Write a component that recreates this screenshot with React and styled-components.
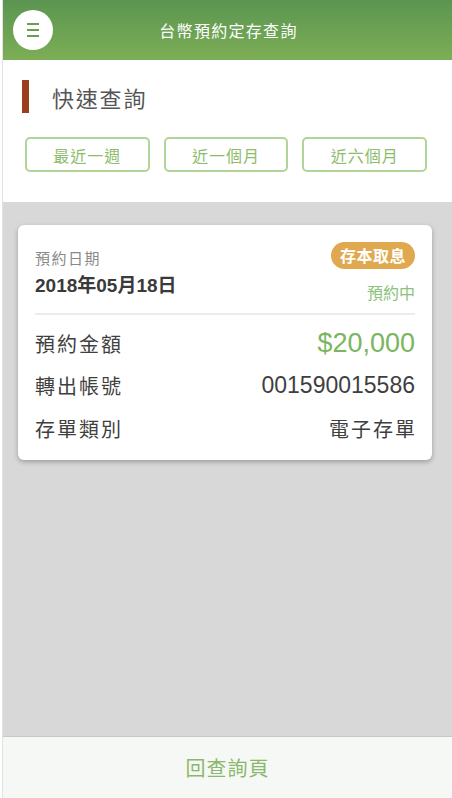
import React from 'react';
import styled, { createGlobalStyle } from 'styled-components';

const GlobalStyle = createGlobalStyle`
  html, body {
    margin: 0;
    padding: 0;
    background: #fff;
  }
  body {
    font-family: "Noto Sans CJK TC", "Liberation Sans", sans-serif;
  }
`;

const Page = styled.div`
  display: flex;
  flex-direction: column;
  height: 798px;
  margin-left: 2px;
  border-left: 1px solid #e2e2e2;
  overflow: hidden;
`;

const Header = styled.header`
  position: relative;
  display: flex;
  align-items: center;
  justify-content: center;
  height: 60px;
  flex-shrink: 0;
  background: linear-gradient(180deg, #5a9551 0%, #7dae56 100%);
`;

const MenuButton = styled.div`
  position: absolute;
  left: 10px;
  top: 10px;
  width: 40px;
  height: 40px;
  border-radius: 50%;
  background: #fff;
  display: flex;
  flex-direction: column;
  align-items: center;
  justify-content: center;
  gap: 3.5px;
`;

const MenuLine = styled.span`
  display: block;
  width: 12px;
  height: 2.5px;
  background: #689f54;
`;

const Title = styled.h1`
  margin: 0 0 0 2px;
  color: #fff;
  font-size: 16px;
  font-weight: 400;
  letter-spacing: 1.3px;
`;

const Quick = styled.section`
  background: #fff;
  padding: 20px 22px 30px 19px;
  flex-shrink: 0;
`;

const SectionTitle = styled.h2`
  margin: 0;
  display: flex;
  align-items: center;
  gap: 23px;
  font-size: 22px;
  font-weight: 400;
  color: #555;
  letter-spacing: 1.8px;
  height: 33px;
  &::before {
    content: '';
    width: 7px;
    height: 33px;
    background: #9b3e20;
  }
`;

const Buttons = styled.div`
  display: grid;
  grid-template-columns: repeat(3, 1fr);
  column-gap: 14px;
  margin-top: 24px;
  padding: 0 3px;
`;

const RangeButton = styled.button`
  height: 35px;
  border: 2px solid #b3d498;
  border-radius: 5px;
  background: #fff;
  color: #8dbd6c;
  font-family: inherit;
  font-size: 16px;
  letter-spacing: 1px;
  padding: 0;
`;

const Body = styled.main`
  flex: 1;
  background: #d8d8d8;
  padding: 23px 20px 23px 15px;
`;

const Card = styled.div`
  background: #fff;
  border-radius: 6px;
  box-shadow: 0 2px 5px rgba(0, 0, 0, 0.28);
  padding: 16px 17px 10px 17px;
`;

const CardTop = styled.div`
  display: flex;
  justify-content: space-between;
  padding-bottom: 11px;
  border-bottom: 2px solid #ececec;
`;

const Col = styled.div`
  display: flex;
  flex-direction: column;
  align-items: ${(p) => (p.$right ? 'flex-end' : 'flex-start')};
`;

const Label = styled.div`
  font-size: 15px;
  color: #8a8a8a;
  margin-top: 8px;
  line-height: 18px;
  letter-spacing: 1.5px;
`;

const DateText = styled.div`
  font-family: "Liberation Sans", "Noto Sans CJK TC", sans-serif;
  font-size: 19px;
  font-weight: 700;
  color: #3a3a3a;
  margin-top: 7px;
  line-height: 24px;
`;

const Badge = styled.span`
  margin-top: 1px;
  background: #e0a94f;
  color: #fff;
  font-size: 16px;
  font-weight: 700;
  border-radius: 14px;
  padding: 0 9px;
  height: 27px;
  line-height: 27px;
  letter-spacing: 0.5px;
`;

const Status = styled.div`
  color: #8cc27b;
  font-size: 16px;
  margin-top: 13px;
  line-height: 20px;
`;

const Rows = styled.div`
  padding-top: 7px;
`;

const Row = styled.div`
  display: flex;
  justify-content: space-between;
  align-items: center;
  height: 42.5px;
`;

const RowLabel = styled.span`
  font-size: 20px;
  color: #3f3f3f;
  letter-spacing: 2px;
`;

const RowValue = styled.span`
  font-family: "Liberation Sans", "Noto Sans CJK TC", sans-serif;
  font-size: ${(p) => (p.$big ? '27px' : '23px')};
  color: ${(p) => (p.$green ? '#7bb55d' : '#3f3f3f')};
`;

const RowValueCjk = styled.span`
  font-size: 20px;
  color: #3f3f3f;
  letter-spacing: 2px;
  margin-right: -2px;
`;

const Footer = styled.footer`
  height: 61px;
  flex-shrink: 0;
  background: #f6f8f6;
  border-top: 1px solid #c8c8c8;
  display: flex;
  align-items: center;
  justify-content: center;
  color: #8ab86b;
  font-size: 20px;
  letter-spacing: 1px;
`;

export default function App() {
  return (
    <>
      <GlobalStyle />
      <Page>
        <Header>
          <MenuButton>
            <MenuLine />
            <MenuLine />
            <MenuLine />
          </MenuButton>
          <Title>台幣預約定存查詢</Title>
        </Header>
        <Quick>
          <SectionTitle>快速查詢</SectionTitle>
          <Buttons>
            <RangeButton>最近一週</RangeButton>
            <RangeButton>近一個月</RangeButton>
            <RangeButton>近六個月</RangeButton>
          </Buttons>
        </Quick>
        <Body>
          <Card>
            <CardTop>
              <Col>
                <Label>預約日期</Label>
                <DateText>2018年05月18日</DateText>
              </Col>
              <Col $right>
                <Badge>存本取息</Badge>
                <Status>預約中</Status>
              </Col>
            </CardTop>
            <Rows>
              <Row>
                <RowLabel>預約金額</RowLabel>
                <RowValue $big $green>$20,000</RowValue>
              </Row>
              <Row>
                <RowLabel>轉出帳號</RowLabel>
                <RowValue>001590015586</RowValue>
              </Row>
              <Row>
                <RowLabel>存單類別</RowLabel>
                <RowValueCjk>電子存單</RowValueCjk>
              </Row>
            </Rows>
          </Card>
        </Body>
        <Footer>回查詢頁</Footer>
      </Page>
    </>
  );
}
